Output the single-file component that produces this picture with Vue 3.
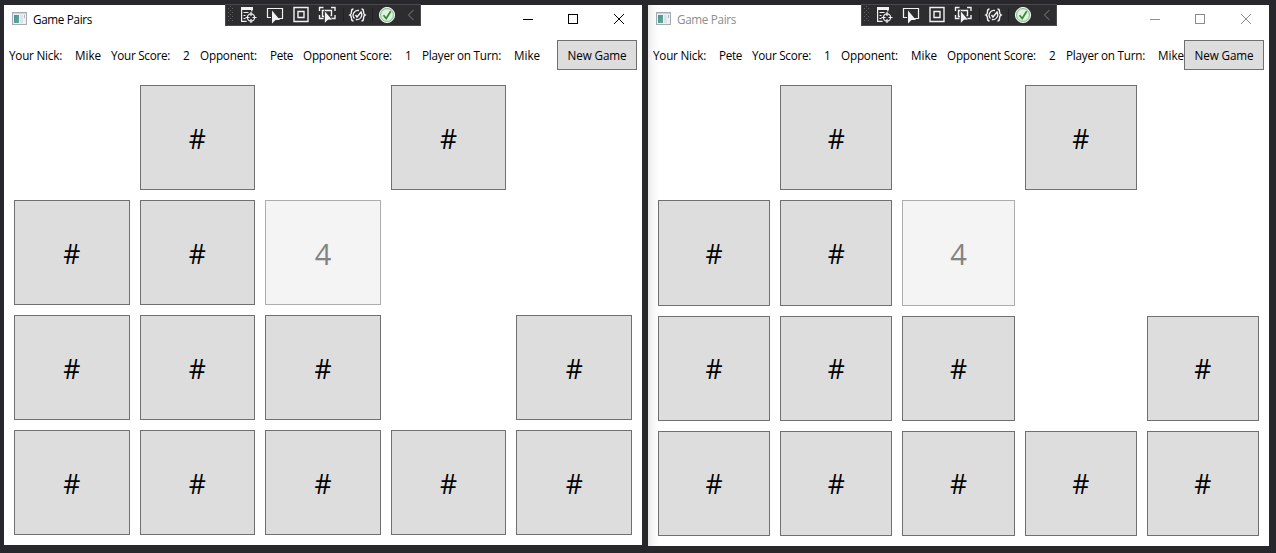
<script setup>
const vFit = {
  mounted(el, { value }) {
    // Spread the difference to the wanted width evenly over the letters.
    const real = el.getBoundingClientRect().width
    el.style.letterSpacing = (value - real) / el.textContent.length + 'px'
    el.style.width = value + 'px'
  },
}

const nameWidth = { Mike: 26, Pete: 23 }
const stats = (nick, score, opponent, opponentScore, turn) => [
  { label: 'Your Nick:', lw: 53, value: nick, vw: nameWidth[nick] },
  { label: 'Your Score:', lw: 59, value: score, vw: 7 },
  { label: 'Opponent:', lw: 57, value: opponent, vw: nameWidth[opponent] },
  { label: 'Opponent Score:', lw: 89, value: opponentScore, vw: 7 },
  { label: 'Player on Turn:', lw: 79, value: turn, vw: nameWidth[turn] },
]

const cards = [' # # ', '##4  ', '### #', '#####'].join('').split('')

const windows = [
  { id: 'first', active: true, stats: stats('Mike', '2', 'Pete', '1', 'Mike') },
  { id: 'second', active: false, stats: stats('Pete', '1', 'Mike', '2', 'Mike') },
]
</script>

<template>
  <main class="desktop">
    <section v-for="w in windows" :key="w.id" class="window" :class="[w.id, { inactive: !w.active }]">
      <header class="titlebar">
        <svg class="app-icon" width="16" height="14" viewBox="0 0 16 14">
          <defs>
            <linearGradient :id="'pane-' + w.id" x1="0" y1="0" x2="1" y2="1">
              <stop offset="0" stop-color="#4a8fa0" />
              <stop offset="1" stop-color="#68a98d" />
            </linearGradient>
          </defs>
          <rect x=".5" y=".5" width="14" height="12" fill="#eef1f4" stroke="#a4abb2" />
          <path d="M1 1.5h13" stroke="#c9d3db" />
          <rect x="2" y="3" width="5" height="8" :fill="'url(#pane-' + w.id + ')'" />
          <rect x="8" y="3" width="3" height="8" fill="#dce3ea" />
          <path d="M12.5 3v3" stroke="#a9b7c0" />
        </svg>
        <span v-fit="59" class="title">Game Pairs</span>
        <div class="controls">
          <svg width="46" height="28" viewBox="0 0 46 28"><path d="M19 14.5h10" /></svg>
          <svg width="46" height="28" viewBox="0 0 46 28"><rect x="18.5" y="9.5" width="9" height="9" /></svg>
          <svg width="46" height="28" viewBox="0 0 46 28"><path d="M18 9l10 10M28 9l-10 10" /></svg>
        </div>
      </header>

      <div class="debugbar">
        <svg width="196" height="22" viewBox="0 0 196 22">
          <g fill="#626267">
            <template v-for="r in 4" :key="r">
              <rect x="3" :y="r * 4" width="1" height="1" />
              <rect x="7" :y="r * 4" width="1" height="1" />
              <rect x="5" :y="r * 4 - 2" width="1" height="1" />
            </template>
          </g>
          <g fill="none" stroke="#f1f1f1" stroke-width="1.2">
            <path d="M16 4.5h12" stroke-width="3" />
            <path d="M16.6 5v12.4h5M26.8 5v2.5" />
            <path d="M18.5 8.5h5M18.5 11.5h2M18.5 14.5h2" />
            <circle cx="26" cy="13.5" r="3.6" />
            <path d="M26 8v4M26 15v4M20.5 13.5h4M27.5 13.5h4" />
            <path d="M46 13.5h-3.5v-9h15v10h-4" />
            <path d="M69 3.5h14v14h-14zM73 7.5h6v6h-6z" stroke-width="1.4" />
            <path d="M94.5 7v-3.5h4M106 3.5h4v3.5M94.5 11v3.5h4M106 14.5h4v-3.5" stroke-width="1.4" />
            <path d="M99 12.5h-1.5v-6h9v5h-1" stroke-width="1.4" />
            <path d="M128.5 5c-1.500 0-2 1-2 2.500s-.5 3-1.500 3.500c1 .5 1.500 2 1.500 3.500s.5 2.500 2 2.500M136.500 5c1.500 0 2 1 2 2.500s.5 3 1.500 3.500c-1 .5-1.500 2-1.500 3.500s-.5 2.500-2 2.500" stroke-width="1.400" />
            <path d="M134 6.500a4.800 4.800 0 0 0-4.500 8M135.800 8a4.800 4.800 0 0 1-5 7.500" stroke-width="1.300" />
            <path d="M130.500 11l1.500 2 4.500-5.500" stroke-width="1.400" />
          </g>
          <path d="M47 6.500v13l3.500-3.500h4.500z" fill="#f1f1f1" />
          <path d="M99.500 6.500v13l3.500-3.500h4.500z" fill="#f1f1f1" stroke="#2d2d30" stroke-width=".7" />
          <path d="M118.500 4v14M147.500 4v14" stroke="#222225" />
          <circle cx="162" cy="11" r="7.600" fill="#d5ebd5" stroke="#f0f7f0" />
          <circle cx="162" cy="11" r="6.400" fill="#e0f1e0" stroke="#6cad70" stroke-width=".8" />
          <path d="M158.500 11.300l2.700 3.200 4.500-7.300" fill="none" stroke="#2d8b35" stroke-width="1.700" />
          <path d="M188.500 6l-5 5 5 5" fill="none" stroke="#5d5d61" stroke-width="1.300" />
        </svg>
      </div>

      <div class="status">
        <div v-for="s in w.stats" :key="s.label" class="stat">
          <span v-fit="s.lw" class="text">{{ s.label }}</span>
          <span v-fit="s.vw" class="text">{{ s.value }}</span>
        </div>
        <button class="new-game"><span v-fit="59" class="text">New Game</span></button>
      </div>

      <div class="board">
        <div v-for="(c, i) in cards" :key="i" class="cell">
          <button v-if="c !== ' '" class="card" :class="{ revealed: c !== '#' }">{{ c }}</button>
        </div>
      </div>
    </section>
  </main>
</template>

<style>
body {
  background: #28272c;
}
</style>

<style scoped>
.desktop {
  display: flex;
  align-items: flex-start;
  gap: 6px;
  box-sizing: border-box;
  width: 1276px;
  height: 553px;
  padding: 5px 7px 0 4px;
  overflow: hidden;
  background: #28272c;
  font-family: "Open Sans", "Noto Sans", sans-serif;
  font-size: 11.7px;
  color: #000;
}
.window {
  position: relative;
  display: flex;
  flex-direction: column;
  flex: none;
  background: #fff;
}
.first {
  width: 638px;
  height: 540px;
}
.second {
  width: 621px;
  height: 541px;
  background: linear-gradient(to right, #e8e8e8, #f7f7f7 5px, #fff 11px);
}
.titlebar {
  display: flex;
  align-items: center;
  height: 28px;
  padding-left: 8px;
}
.app-icon {
  flex: none;
  margin-right: 5px;
}
.title {
  display: block;
  white-space: nowrap;
  line-height: 16px;
}
.controls {
  display: flex;
  margin-left: auto;
  fill: none;
  stroke: #000;
}
.controls svg {
  display: block;
}
.inactive .title {
  color: #8d8d8d;
}
.inactive .controls {
  stroke: #8d8d8d;
}
.debugbar {
  position: absolute;
  top: -1px;
  left: 50%;
  width: 196px;
  height: 22px;
  margin-left: -98px;
  background: #2d2d30;
  box-shadow: inset 0 0 0 1px #4a4a4e;
}
.second .debugbar {
  margin-left: -97.5px;
}
.debugbar svg {
  display: block;
}
.status {
  display: flex;
  align-items: center;
  height: 30px;
  margin-top: 7px;
  padding: 0 5px;
}
.stat {
  display: flex;
  flex: none;
  gap: 13px;
  margin-right: 10px;
}
.stat:nth-last-child(2) {
  margin-right: 0;
}
.text {
  display: block;
  flex: none;
  white-space: nowrap;
  line-height: 16px;
}
.new-game {
  display: flex;
  flex: none;
  align-items: center;
  justify-content: center;
  box-sizing: border-box;
  width: 80px;
  height: 30px;
  margin: 0 0 0 auto;
  padding: 0;
  border: 1px solid #707070;
  background: #ddd;
  font: inherit;
  color: inherit;
}
.board {
  display: grid;
  flex: 1;
  grid-template-columns: repeat(5, 1fr);
  grid-template-rows: repeat(4, 1fr);
  margin: 10px 5px 5px;
}
.cell {
  display: flex;
  min-width: 0;
  min-height: 0;
  padding: 5px;
}
.card {
  flex: 1;
  min-width: 0;
  padding: 2px 0 0;
  border: 1px solid #707070;
  background: #ddd;
  font: 400 26.5px/30px "Open Sans", "Noto Sans", sans-serif;
  color: #000;
}
.revealed {
  border-color: #adadad;
  background: #f4f4f4;
  font-size: 29px;
  color: #838383;
}
</style>
